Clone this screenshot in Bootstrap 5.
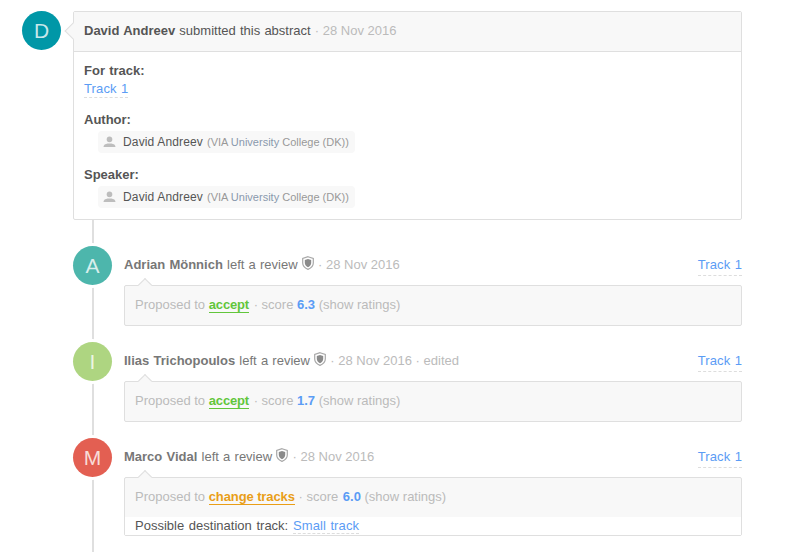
<!DOCTYPE html>
<html lang="en">
<head>
<meta charset="utf-8">
<title>Abstract timeline</title>
<link rel="stylesheet" href="https://cdn.jsdelivr.net/npm/bootstrap@5.3.0/dist/css/bootstrap.min.css">
<style>
html,body{height:552px;overflow:hidden;}
body{font-family:"Liberation Sans",Arial,sans-serif;font-size:13px;color:#555;background:#fff;word-spacing:.6px;}
.tl-page{padding:11px 59px 0 22px;}
.tl-first{display:flex;align-items:flex-start;gap:12px;position:relative;z-index:1;}
.tl-avatar{flex:none;width:39px;height:39px;border-radius:50%;color:rgba(255,255,255,.78);font-size:21px;line-height:39px;text-align:center;box-shadow:0 0 0 3px #fff;position:relative;z-index:1;word-spacing:0;}
.av-d{background:#0097a7;}.av-a{background:#4db6ac;}.av-i{background:#aed581;}.av-m{background:#e35f52;}
.tl-box{flex:1;min-width:0;border:1px solid #dfdfdf;border-radius:2px;position:relative;background:#fff;}
.tl-head{background:#f8f8f8;border-bottom:1px solid #dfdfdf;height:40px;padding:0 10px 2px;display:flex;align-items:center;position:relative;}
.tl-first .tl-box::before{content:"";position:absolute;left:-7px;top:13px;width:12px;height:12px;background:#f8f8f8;border-left:1px solid #dfdfdf;border-bottom:1px solid #dfdfdf;transform:rotate(45deg);}
.tl-body{padding:10px 10px 0;height:167px;line-height:18px;}
.tl-label{font-weight:700;line-height:18px;}
.tl-link{color:#5b9cf5;text-decoration:none;border-bottom:1px dashed #ddd;padding-bottom:1px;word-spacing:.6px;letter-spacing:.12px;}
.tl-sec{margin-bottom:13px;}
.tl-chip{display:inline-flex;align-items:center;background:#f8f8f8;border-radius:4px;height:22px;margin:2px 0 0 14px;padding:0 6px 0 5px;font-size:12px;word-spacing:0;letter-spacing:.15px;}
.tl-chip svg{margin-right:7px;}
.tl-aff{color:#999;font-size:11px;margin-left:4px;letter-spacing:0;}
.tl-aff b{font-weight:400;color:#8a98ad;}
.tl-sep{color:#bbb;word-spacing:0;}
.tl-timeline{position:relative;padding:26px 0 16px 51px;}
.tl-timeline::before{content:"";position:absolute;left:70px;top:0;bottom:0;width:2px;background:#dfdfdf;}
.tl-rev{display:flex;gap:12px;position:relative;margin-bottom:16px;}
.tl-rev:last-child{margin-bottom:0;}
.tl-main{flex:1;min-width:0;}
.tl-meta{height:39px;padding-bottom:2px;display:flex;align-items:center;justify-content:space-between;color:#777;}
.tl-meta b{color:#777;}
.tl-meta .tl-link{margin-top:2px;}
.tl-shield{vertical-align:-1px;}
.tl-panel{border:1px solid #dfdfdf;border-radius:2px;background:#f8f8f8;position:relative;color:#bbb;}
.tl-panel::before{content:"";position:absolute;left:15px;top:-6px;width:10px;height:10px;background:#f8f8f8;border-left:1px solid #dfdfdf;border-top:1px solid #dfdfdf;transform:rotate(45deg);}
.tl-line{height:39px;padding:0 10px 2px;display:flex;align-items:center;white-space:pre;word-spacing:0;}
.tl-acc{color:#62c63b;font-weight:700;border-bottom:1px solid #62c63b;line-height:15px;margin-right:1px;letter-spacing:-.15px;}
.tl-chg{color:#e99e17;font-weight:700;border-bottom:1px solid #e99e17;line-height:15px;letter-spacing:-.1px;}
.tl-score{color:#5b9cf5;font-weight:700;}
.tl-chg ~ .tl-score{margin-left:1px;}
.tl-dest{background:#fff;height:18px;line-height:17px;padding:0 10px;color:#555;position:relative;word-spacing:1.1px;}
.tl-dest .tl-link{padding-bottom:0;}
</style>
</head>
<body>
<svg width="0" height="0" class="d-block position-absolute">
  <defs>
    <symbol id="shield" viewBox="0 0 12 14"><path d="M6 .7 11.300 2.500V7c0 3-2.300 5.100-5.300 6.400C3 12.100.7 10 .7 7V2.500Z" fill="#fff" stroke="#a8a8a8" stroke-width="1.200"/><path d="M6 3 9.200 4.100V7c0 1.900-1.400 3.200-3.200 4.200C4.200 10.200 2.800 8.900 2.800 7V4.100Z" fill="#8a8a8a"/></symbol>
    <symbol id="user" viewBox="0 0 14 12"><circle cx="7" cy="3.200" r="3" fill="#bdbdbd"/><path d="M.5 11.500c0-2.600 2-3.600 4.500-4h4c2.500.4 4.500 1.400 4.500 4Z" fill="#bdbdbd"/></symbol>
  </defs>
</svg>
<div class="tl-page">
  <div class="tl-first">
    <div class="tl-avatar av-d">D</div>
    <div class="tl-box">
      <div class="tl-head"><span><b>David Andreev</b> submitted this abstract <span class="tl-sep">· 28 Nov 2016</span></span></div>
      <div class="tl-body">
        <div class="tl-sec"><div class="tl-label">For track:</div><a class="tl-link" href="#">Track 1</a></div>
        <div class="tl-sec"><div class="tl-label">Author:</div>
          <span class="tl-chip"><svg width="13" height="12"><use href="#user"/></svg>David Andreev <span class="tl-aff">(VIA <b>University</b> College (DK))</span></span></div>
        <div><div class="tl-label">Speaker:</div>
          <span class="tl-chip"><svg width="13" height="12"><use href="#user"/></svg>David Andreev <span class="tl-aff">(VIA <b>University</b> College (DK))</span></span></div>
      </div>
    </div>
  </div>
  <div class="tl-timeline">
    <div class="tl-rev">
      <div class="tl-avatar av-a">A</div>
      <div class="tl-main">
        <div class="tl-meta"><span><b>Adrian Mönnich</b> left a review <svg class="tl-shield" width="12" height="14"><use href="#shield"/></svg> <span class="tl-sep">· 28 Nov 2016</span></span><a class="tl-link" href="#">Track 1</a></div>
        <div class="tl-panel"><div class="tl-line">Proposed to <span class="tl-acc">accept</span> · score <span class="tl-score">6.3</span> (show ratings)</div></div>
      </div>
    </div>
    <div class="tl-rev">
      <div class="tl-avatar av-i">I</div>
      <div class="tl-main">
        <div class="tl-meta"><span><b>Ilias Trichopoulos</b> left a review <svg class="tl-shield" width="12" height="14"><use href="#shield"/></svg> <span class="tl-sep">· 28 Nov 2016 · edited</span></span><a class="tl-link" href="#">Track 1</a></div>
        <div class="tl-panel"><div class="tl-line">Proposed to <span class="tl-acc">accept</span> · score <span class="tl-score">1.7</span> (show ratings)</div></div>
      </div>
    </div>
    <div class="tl-rev">
      <div class="tl-avatar av-m">M</div>
      <div class="tl-main">
        <div class="tl-meta"><span><b>Marco Vidal</b> left a review <svg class="tl-shield" width="12" height="14"><use href="#shield"/></svg> <span class="tl-sep">· 28 Nov 2016</span></span><a class="tl-link" href="#">Track 1</a></div>
        <div class="tl-panel"><div class="tl-line">Proposed to <span class="tl-chg">change tracks</span> · score <span class="tl-score">6.0</span> (show ratings)</div>
          <div class="tl-dest">Possible destination track: <a class="tl-link" href="#">Small track</a></div></div>
      </div>
    </div>
  </div>
</div>
<script src="https://cdn.jsdelivr.net/npm/bootstrap@5.3.0/dist/js/bootstrap.bundle.min.js"></script>
</body>
</html>
